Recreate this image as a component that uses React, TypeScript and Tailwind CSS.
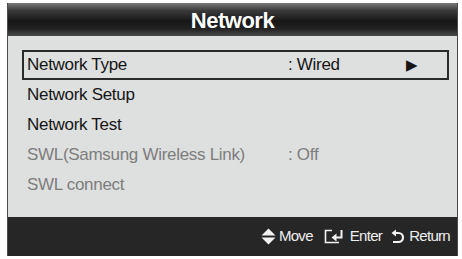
import React from "react";

const ROWS = [
  { label: "Network Type", value: ": Wired", arrow: true, selected: true, dim: false },
  { label: "Network Setup", value: "", arrow: false, selected: false, dim: false },
  { label: "Network Test", value: "", arrow: false, selected: false, dim: false },
  { label: "SWL(Samsung Wireless Link)", value: ": Off", arrow: false, selected: false, dim: true },
  { label: "SWL connect", value: "", arrow: false, selected: false, dim: true },
];

function MoveIcon() {
  return (
    <svg width="15" height="17" viewBox="0 0 15 17" className="mr-[3px]">
      <polygon points="7.5,0.5 14.5,7.5 0.5,7.5" fill="#f2f2f2" />
      <polygon points="0.5,9.5 14.5,9.5 7.5,16.5" fill="#f2f2f2" />
    </svg>
  );
}

function EnterIcon() {
  return (
    <svg width="22" height="15" viewBox="0 0 22 15" className="mr-[4px]">
      <path d="M8 1.5 H1.5 V13.5 H15" fill="none" stroke="#f2f2f2" strokeWidth="1.6" />
      <path d="M17.5 1 V8.5 H11" fill="none" stroke="#f2f2f2" strokeWidth="2" />
      <polygon points="7.5,8.5 12.5,4.5 12.5,12.5" fill="#f2f2f2" />
    </svg>
  );
}

function ReturnIcon() {
  return (
    <svg width="14" height="16" viewBox="0 0 14 16" className="mr-[4px]">
      <path d="M4 4 H7.5 A4.5 4.5 0 0 1 7.5 13 H2" fill="none" stroke="#f2f2f2" strokeWidth="2.2" />
      <polygon points="0.5,4 5,0.5 5,7.5" fill="#f2f2f2" />
    </svg>
  );
}

export default function App() {
  return (
    <div className="w-[462px] h-[259px] bg-white pt-[3px] pl-[7px] font-['Liberation_Sans',Arial,sans-serif]">
      <div className="w-[451px] h-[253px] flex flex-col border-x border-[#4a4a4a]">
        {/* Title bar */}
        <div className="h-[33px] flex items-center justify-center bg-[linear-gradient(to_bottom,#7a7a7a_0%,#3c3c3c_22%,#161616_55%,#222222_78%,#4a4a4a_100%)]">
          <span className="text-white font-bold text-[22px] tracking-[-0.5px] leading-none mt-[2px]">
            Network
          </span>
        </div>

        {/* Menu */}
        <div className="h-[181px] bg-[#dedfdf] pt-[14px] pl-[14px] pr-[8px]">
          {ROWS.map((row) => (
            <div
              key={row.label}
              className={
                "h-[30px] flex items-center text-[17px] tracking-[-0.3px] " +
                (row.selected ? "border-2 border-[#2a2a2a] pl-[3px] " : "pl-[5px] ") +
                (row.dim ? "text-[#7d7d7d]" : "text-[#161616]")
              }
            >
              <span className="w-[261px] shrink-0">{row.label}</span>
              <span className="w-[118px] shrink-0">{row.value}</span>
              {row.arrow && <span className="text-[15px] text-[#161616]">▶</span>}
            </div>
          ))}
        </div>

        {/* Footer */}
        <div className="flex-1 bg-[#262626] flex items-center justify-end pr-[7px] text-[#eeeeee] text-[15px] tracking-[-0.7px]">
          <MoveIcon />
          <span className="mr-[11px]">Move</span>
          <EnterIcon />
          <span className="mr-[9px]">Enter</span>
          <ReturnIcon />
          <span>Return</span>
        </div>
      </div>
    </div>
  );
}
